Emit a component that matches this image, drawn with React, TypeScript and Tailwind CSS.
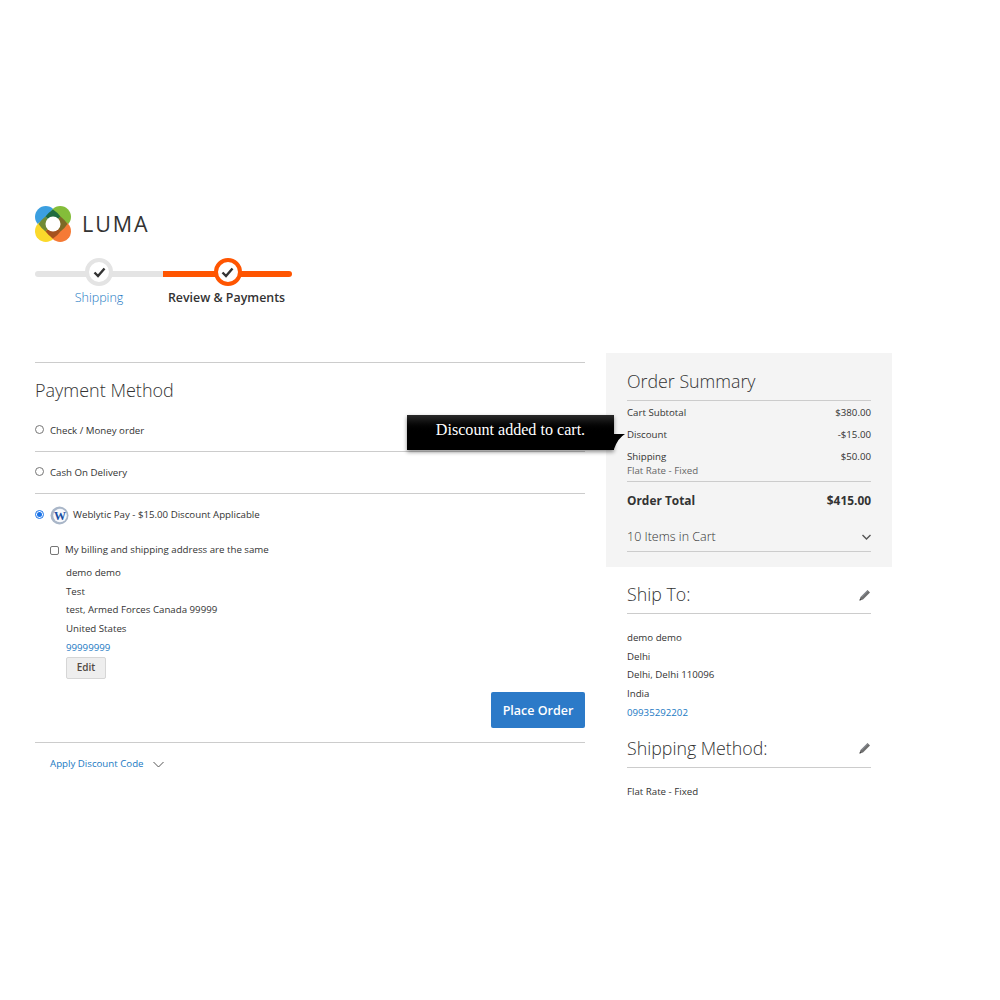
const font = { fontFamily: '"Open Sans", sans-serif' }

function Logo() {
  return (
    <svg width="36" height="36" viewBox="0 0 36 36">
      <circle cx="10.8" cy="10.8" r="10.8" fill="#3b9fe0" />
      <circle cx="25.2" cy="10.8" r="10.8" fill="#84bd3a" />
      <circle cx="10.8" cy="25.2" r="10.8" fill="#fbd92b" />
      <circle cx="25.2" cy="25.2" r="10.8" fill="#f57a35" />
      <path d="M18 18L10.5 10.5Q13.5 6.5 18 3.5 22.5 6.5 25.5 10.5z" fill="#1f6b3f" />
      <path d="M18 18L10.5 10.5Q6.5 13.5 3.5 18 6.5 22.5 10.5 25.5z" fill="#6f8a35" />
      <path d="M18 18L25.5 10.5Q29.5 13.5 32.5 18 29.5 22.5 25.5 25.5z" fill="#7d6a26" />
      <path d="M18 18L10.5 25.5Q13.5 29.5 18 32.5 22.5 29.5 25.5 25.5z" fill="#a5511f" />
      <circle cx="18" cy="18" r="7.5" fill="#ffffff" />
    </svg>
  )
}

function StepCheck({ active }: { active?: boolean }) {
  return (
    <div className={`w-[28px] h-[28px] rounded-full bg-white flex items-center justify-center border-[4px] ${active ? 'border-[#ff5501]' : 'border-[#e4e4e4]'}`}>
      <svg width="13" height="11" viewBox="0 0 13 11">
        <path d="M1.5 5.5 L5 9 L11.5 1.5" fill="none" stroke="#333333" strokeWidth="2.4" />
      </svg>
    </div>
  )
}

function WeblyticIcon() {
  return (
    <svg width="19" height="19" viewBox="0 0 19 19">
      <circle cx="9.5" cy="9.5" r="9" fill="#a9b6c8" />
      <circle cx="10" cy="9.5" r="6.8" fill="#f7f9fc" />
      <path d="M2 7a8 8 0 0 0 7 11 8 8 0 0 1-7-11z" fill="#66778f" />
      <text x="10" y="13.5" textAnchor="middle" fontSize="12" fontWeight="700" fill="#1a4fa3" fontFamily="Liberation Serif, serif">W</text>
    </svg>
  )
}

function Chevron({ width, stroke, color }: { width: number; stroke: number; color: string }) {
  return (
    <svg width={width} height={width / 2 + 2} viewBox={`0 0 ${width} ${width / 2 + 2}`}>
      <path d={`M0.5 1 L${width / 2} ${width / 2 + 0.5} L${width - 0.5} 1`} fill="none" stroke={color} strokeWidth={stroke} />
    </svg>
  )
}

function PencilIcon() {
  return (
    <svg width="12" height="12" viewBox="0 0 12 12">
      <path d="M0.5 11.5 L1.5 8 L8.5 1 L11 3.5 L4 10.5 Z" fill="#6f6f6f" />
      <path d="M0.5 11.5 L1 9.7 L2.3 11 Z" fill="#333333" />
      <path d="M2.5 8 L8.5 2" stroke="#9aa3b2" strokeWidth="0.8" />
    </svg>
  )
}

function Address({ lines, phone }: { lines: string[]; phone: string }) {
  return (
    <div className="text-[9.7px] leading-[18.7px] text-[#333333]">
      {lines.map(line => (
        <div key={line}>{line}</div>
      ))}
      <div className="text-[#1979c3]">{phone}</div>
    </div>
  )
}

function SectionTitle({ title }: { title: string }) {
  return (
    <div className="flex items-center justify-between border-b border-[#cccccc] h-[40px] pt-[2px]">
      <span className="text-[17.8px] font-light text-[#333333]">{title}</span>
      <PencilIcon />
    </div>
  )
}

function SummaryRow({ label, value }: { label: string; value: string }) {
  return (
    <div className="flex justify-between h-[22px] items-center text-[9.7px] text-[#333333]">
      <span>{label}</span>
      <span>{value}</span>
    </div>
  )
}

export default function App() {
  return (
    <div className="relative w-[1000px] h-[1000px] bg-white pt-[206px] px-[35px] overflow-hidden" style={font}>
      {/* Logo */}
      <div className="flex items-center gap-[11px] h-[36px]">
        <Logo />
        <span className="text-[21.5px] font-medium tracking-[0.09em] text-[#333333]">LUMA</span>
      </div>

      {/* Progress */}
      <div className="mt-[16px] flex w-[257px]">
        <div className="w-[128px] flex flex-col items-center">
          <div className="relative w-full h-[28px] flex items-center justify-center">
            <div className="absolute left-0 right-0 top-[13px] h-[6px] rounded-l-full bg-[#e4e4e4]" />
            <div className="relative"><StepCheck /></div>
          </div>
          <span className="mt-[3px] text-[12.5px] leading-[18px] font-light text-[#1979c3]">Shipping</span>
        </div>
        <div className="w-[129px] flex flex-col items-center">
          <div className="relative w-full h-[28px] flex items-center justify-center">
            <div className="absolute left-0 right-0 top-[13px] h-[6px] rounded-r-full bg-[#ff5501]" />
            <div className="relative"><StepCheck active /></div>
          </div>
          <span className="mt-[3px] -ml-[2px] text-[12.4px] leading-[18px] font-semibold text-[#333333] whitespace-nowrap">Review &amp; Payments</span>
        </div>
      </div>

      <div className="mt-[46px] flex items-start gap-[21px]">
        {/* Payment column */}
        <div className="w-[550px] mt-[9px]">
          <div className="border-t border-[#cccccc] pt-[15px] h-[46px] text-[18px] leading-[24px] font-light text-[#333333]">Payment Method</div>

          <div className="h-[44px] pt-[4px] flex items-center gap-[6px] border-b border-[#cccccc] text-[9.7px] text-[#333333]">
            <span className="w-[9px] h-[9px] -mt-[4px] rounded-full border border-[#767676]" />
            Check / Money order
          </div>
          <div className="h-[42px] pt-[2px] flex items-center gap-[6px] border-b border-[#cccccc] text-[9.7px] text-[#333333]">
            <span className="w-[9px] h-[9px] -mt-[4px] rounded-full border border-[#767676]" />
            Cash On Delivery
          </div>
          <div className="h-[42px] flex items-center text-[9.7px] text-[#333333]">
            <span className="w-[9px] h-[9px] -mt-[2px] rounded-full border border-[#1a73e8] flex items-center justify-center">
              <span className="w-[5px] h-[5px] rounded-full bg-[#1a73e8]" />
            </span>
            <span className="ml-[6px]"><WeblyticIcon /></span>
            <span className="ml-[4px]">Weblytic Pay - $15.00 Discount Applicable</span>
          </div>

          <div className="pl-[15px] mt-[5px]">
            <div className="h-[18px] flex items-center gap-[6px] text-[9.7px] text-[#333333]">
              <span className="w-[9px] h-[9px] rounded-[2px] border border-[#767676]" />
              My billing and shipping address are the same
            </div>
            <div className="pl-[16px] mt-[5px]">
              <Address lines={['demo demo', 'Test', 'test, Armed Forces Canada 99999', 'United States']} phone="99999999" />
              <button className="block -mt-[1px] w-[40px] h-[22px] rounded-[2px] border border-[#d6d6d6] bg-[#eeeeee] text-[10px] font-semibold text-[#514943]">Edit</button>
            </div>
          </div>

          <div className="flex justify-end mt-[13px]">
            <button className="w-[94px] h-[36px] pt-[3px] rounded-[2px] bg-[#2c7ac8] text-white text-[12.5px] font-semibold">Place Order</button>
          </div>

          <div className="mt-[14px] border-t border-[#cccccc] pl-[15px] pt-[3px] h-[42px] flex items-center gap-[9px] text-[9.7px] text-[#1979c3]">
            Apply Discount Code
            <Chevron width={11} stroke={1} color="#555555" />
          </div>
        </div>

        {/* Sidebar */}
        <div className="w-[286px]">
          <div className="bg-[#f4f4f4] h-[214px] px-[21px] pt-[17px]">
            <div className="h-[31px] border-b border-[#cccccc] text-[17.8px] leading-[22px] font-light text-[#333333]">Order Summary</div>
            <div className="pt-[1px]">
              <SummaryRow label="Cart Subtotal" value="$380.00" />
              <SummaryRow label="Discount" value="-$15.00" />
              <SummaryRow label="Shipping" value="$50.00" />
              <div className="-mt-[4px] h-[17px] text-[9.7px] leading-[14px] text-[#666666]">Flat Rate - Fixed</div>
            </div>
            <div className="border-t border-[#cccccc] h-[36px] pt-[3px] flex items-center justify-between text-[11.9px] font-bold text-[#333333]">
              <span>Order Total</span>
              <span>$415.00</span>
            </div>
            <div className="mt-[1px] h-[34px] pt-[5px] border-b border-[#cccccc] flex items-center justify-between text-[12.5px] font-light text-[#333333]">
              <span>10 Items in Cart</span>
              <Chevron width={9} stroke={1.4} color="#555555" />
            </div>
          </div>

          <div className="pl-[21px] pr-[21px] mt-[7px]">
            <SectionTitle title="Ship To:" />
            <div className="mt-[15px]">
              <Address lines={['demo demo', 'Delhi', 'Delhi, Delhi 110096', 'India']} phone="09935292202" />
            </div>
            <div className="mt-[5px]">
              <SectionTitle title="Shipping Method:" />
            </div>
            <div className="mt-[15px] text-[9.7px] leading-[18.7px] text-[#333333]">Flat Rate - Fixed</div>
          </div>
        </div>
      </div>

      {/* Tooltip */}
      <div className="absolute left-[407px] top-[415px] w-[207px] h-[35px] bg-linear-to-b from-[#2a2a2a] via-black to-black shadow-[0_2px_4px_rgba(0,0,0,0.45)] text-center text-white text-[16.1px] leading-[29px]" style={{ fontFamily: '"Liberation Serif", serif' }}>
        Discount added to cart.
        <svg className="absolute left-[207px] top-[18px]" width="12" height="17" viewBox="0 0 12 17">
          <path d="M0 1 L11 1 Q4 5 0 16 Z" fill="#000000" />
        </svg>
      </div>
    </div>
  )
}
